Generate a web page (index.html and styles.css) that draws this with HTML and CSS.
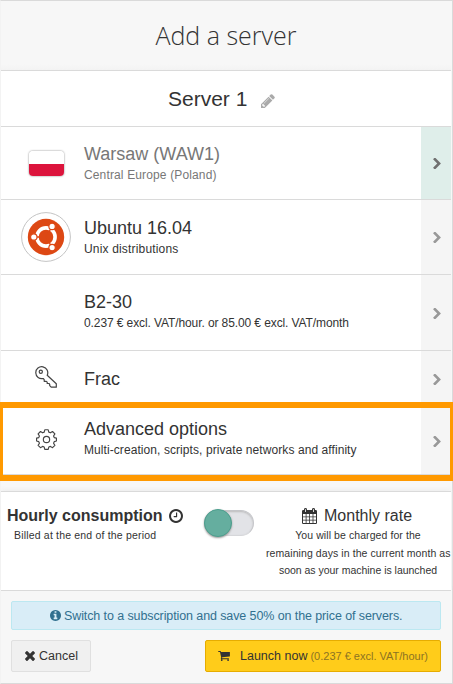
FILE: index.html
```html
<!DOCTYPE html>
<html lang="en">
<head>
<meta charset="utf-8">
<title>Add a server</title>
<link rel="stylesheet" href="styles.css">
</head>
<body>
<svg class="defs" width="0" height="0">
  <symbol id="chevron" viewBox="346 178 1036 1484"><path d="M1363 877l-742 742q-19 19-45 19t-45-19l-166-166q-19-19-19-45t19-45l531-531-531-531q-19-19-19-45t19-45l166-166q19-19 45-19t45 19l742 742q19 19 19 45t-19 45z" transform="translate(0 88)"/></symbol>
</svg>
<main class="panel">
  <h1 class="heading"><span>Add a server</span></h1>
  <section class="name">
    <span class="name-text">Server 1</span>
    <svg class="pencil" viewBox="128 128 1536 1536"><path d="M491 1536l91-91-235-235-91 91v107h128v128h107zm523-928q0-22-22-22-10 0-17 7l-542 542q-7 7-7 17 0 22 22 22 10 0 17-7l542-542q7-7 7-17zm-54-192l416 416-832 832h-416v-416zm683 96q0 53-37 90l-166 166-416-416 166-165q36-38 90-38 53 0 91 38l235 234q37 39 37 91z"/></svg>
  </section>
  <section class="row region">
    <div class="icon"><span class="flag"></span></div>
    <div class="label"><div class="title">Warsaw (WAW1)</div><div class="sub s-warsaw">Central Europe (Poland)</div></div>
    <div class="arrow active"><svg><use href="#chevron"/></svg></div>
  </section>
  <section class="row system">
    <div class="icon">
      <svg class="ubuntu" viewBox="0 0 50 50">
        <circle cx="25" cy="25" r="24.400" fill="#fff" stroke="#c4c4c4"/>
        <circle cx="25" cy="25" r="18.200" fill="#dd4814"/>
        <circle cx="25" cy="25" r="9.100" fill="none" stroke="#fff" stroke-width="3.600"/>
        <path d="M25 25H11M25 25L32 12.900M25 25L32 37.100" stroke="#dd4814" stroke-width="1.300"/>
        <g fill="#fff" stroke="#dd4814" stroke-width="1.200">
          <circle cx="12.800" cy="25" r="3.200"/><circle cx="31.100" cy="14.400" r="3.200"/><circle cx="31.100" cy="35.600" r="3.200"/>
        </g>
      </svg>
    </div>
    <div class="label"><div class="title">Ubuntu 16.04</div><div class="sub s-ubuntu">Unix distributions</div></div>
    <div class="arrow"><svg><use href="#chevron"/></svg></div>
  </section>
  <section class="row flavor">
    <div class="icon"></div>
    <div class="label"><div class="title">B2-30</div><div class="sub s-flavor">0.237 € excl. VAT/hour. or 85.00 € excl. VAT/month</div></div>
    <div class="arrow"><svg><use href="#chevron"/></svg></div>
  </section>
  <section class="row key">
    <div class="icon">
      <svg class="line-icon key-icon" viewBox="0 0 22 22"><circle cx="5.800" cy="5.800" r="1.600"/><path d="M12.200 9.200A6 6 0 1 0 8.200 12.500L9.200 13.600V15.300H11.300L12.200 16.200V17.500H14L14.700 18.300V19.600L16.200 21.200H21.300V17.800Z"/></svg>
    </div>
    <div class="label"><div class="title">Frac</div></div>
    <div class="arrow"><svg><use href="#chevron"/></svg></div>
  </section>
  <section class="row advanced">
    <div class="icon">
      <svg class="line-icon gear-icon" viewBox="0 0 22 22"><circle cx="11" cy="11" r="3.300"/><path d="M9.200 .8h3.600l.6 2.500 1.700.7 2.200-1.400 2.500 2.500-1.400 2.200.7 1.700 2.300.6v3l-2.300.6-.7 1.700 1.400 2.200-2.500 2.500-2.200-1.400-1.700.7-.6 2.500H9.200l-.6-2.500-1.700-.7-2.200 1.400-2.500-2.500 1.400-2.200-.7-1.700-2.300-.6v-3l2.300-.6.7-1.700-1.400-2.200 2.500-2.500 2.200 1.400 1.700-.7Z"/></svg>
    </div>
    <div class="label"><div class="title">Advanced options</div><div class="sub s-adv">Multi-creation, scripts, private networks and affinity</div></div>
    <div class="arrow"><svg><use href="#chevron"/></svg></div>
    <div class="highlight"></div>
  </section>
  <section class="billing">
    <div class="hourly">
      <div class="plan"><b>Hourly consumption</b><svg class="clock" viewBox="128 128 1536 1536"><path d="M1024 544v448q0 14-9 23t-23 9h-320q-14 0-23-9t-9-23v-64q0-14 9-23t23-9h224v-352q0-14 9-23t23-9h64q14 0 23 9t9 23zm416 352q0-148-73-273t-198-198-273-73-273 73-198 198-73 273 73 273 198 198 273 73 273-73 198-198 73-273zm224 0q0 209-103 385.500t-279.500 279.500-385.500 103-385.500-103-279.500-279.500-103-385.500 103-385.500 279.500-279.500 385.500-103 385.500 103 279.500 279.500 103 385.500z"/></svg></div>
      <div class="note"><span class="n-hourly">Billed at the end of the period</span></div>
    </div>
    <div class="toggle"><span class="knob"></span></div>
    <div class="monthly">
      <div class="plan"><svg class="calendar" viewBox="0 0 15 16"><path fill-rule="evenodd" d="M0 3.200Q0 2 1.200 2H2V1.400Q2 0 3.500 0T5 1.400V2H10V1.400Q10 0 11.500 0T13 1.400V2H13.800Q15 2 15 3.200V14.800Q15 16 13.800 16H1.200Q0 16 0 14.800ZM1 6V8.500H3.700V6ZM4.500 6V8.500H7.200V6ZM8 6V8.500H10.600V6ZM11.400 6V8.500H14V6ZM1 9.200V11.700H3.700V9.200ZM4.500 9.200V11.700H7.200V9.200ZM8 9.200V11.700H10.600V9.200ZM11.400 9.200V11.700H14V9.200ZM1 12.400V15H3.700V12.400ZM4.500 12.400V15H7.200V12.400ZM8 12.400V15H10.600V12.400ZM11.400 12.400V15H14V12.400ZM3.100 1.200V4H3.900V1.200ZM11.100 1.200V4H11.900V1.200Z"/></svg><span>Monthly rate</span></div>
      <div class="note">You will be charged for the<br>remaining days in the current month as<br><span class="n-last">soon as your machine is launched</span></div>
    </div>
  </section>
  <footer class="footer">
    <div class="alert"><svg class="info" viewBox="128 128 1536 1536"><path d="M1152 1376v-160q0-14-9-23t-23-9h-96v-512q0-14-9-23t-23-9h-320q-14 0-23 9t-9 23v160q0 14 9 23t23 9h96v320h-96q-14 0-23 9t-9 23v160q0 14 9 23t23 9h448q14 0 23-9t9-23zm-128-896v-160q0-14-9-23t-23-9h-192q-14 0-23 9t-9 23v160q0 14 9 23t23 9h192q14 0 23-9t9-23zm640 416q0 209-103 385.500t-279.500 279.500-385.500 103-385.500-103-279.500-279.500-103-385.500 103-385.500 279.500-279.500 385.500-103 385.500 103 279.500 279.500 103 385.500z"/></svg><span class="alert-text">Switch to a subscription and save 50% on the price of servers.</span></div>
    <div class="actions">
      <button class="btn cancel"><svg class="times" viewBox="302 366 1188 1188"><path d="M1490 1322q0 40-28 68l-136 136q-28 28-68 28t-68-28l-294-294-294 294q-28 28-68 28t-68-28l-136-136q-28-28-28-68t28-68l294-294-294-294q-28-28-28-68t28-68l136-136q28-28 68-28t68 28l294 294 294-294q28-28 68-28t68 28l136 136q28 28 28 68t-28 68l-294 294 294 294q28 28 28 68z"/></svg><span>Cancel</span></button>
      <button class="btn launch"><svg class="cart" viewBox="64 256 1664 1408"><path d="M704 1536q0 52-38 90t-90 38-90-38-38-90 38-90 90-38 90 38 38 90zm896 0q0 52-38 90t-90 38-90-38-38-90 38-90 90-38 90 38 38 90zm128-1088v512q0 24-16.500 42.500t-40.500 21.500l-1044 122q13 60 13 70 0 16-24 64h920q26 0 45 19t19 45-19 45-45 19h-1024q-26 0-45-19t-19-45q0-11 8-31.500t16-36 21.500-40 15.500-29.500l-177-823h-204q-26 0-45-19t-19-45 19-45 45-19h256q16 0 28.500 6.500t19.500 15.500 13 24.500 8 26 5.500 29.500 4.500 26h1201q26 0 45 19t19 45z"/></svg><span>Launch now</span><span class="price">(0.237 € excl. VAT/hour)</span></button>
    </div>
  </footer>
</main>
</body>
</html>
```
FILE: styles.css
```css
* { box-sizing: border-box; }
body { margin: 0; font-family: "Liberation Sans", Arial, sans-serif; color: #333; background: #f7f7f7; }
svg { display: block; flex: none; fill: currentColor; }
.defs { position: absolute; }
.panel { width: 453px; height: 684px; border: 1px solid #dadada; border-left-color: #f3f3f3; background: #f7f7f7; white-space: nowrap; display: flex; flex-direction: column; padding-right: 1px; }
.heading { margin: 0; height: 69px; display: flex; justify-content: center; font: 300 25px/68px "Open Sans", sans-serif; background: linear-gradient(#f7f7f7 92%, #f3f3f3); }
.name { height: 56px; border-top: 1px solid #dadada; background: #fff; display: flex; align-items: center; padding: 0 0 0 167px; font-size: 21px; line-height: 24px; }
.pencil { width: 14px; height: 14px; margin: 5px 0 0 14px; color: #aaa; }
.row { position: relative; display: flex; border-top: 1px solid #dadada; background: #fff; }
.region { height: 73px; }
.system { height: 75px; }
.flavor { height: 76px; }
.key { height: 57px; }
.advanced { height: 68px; border-bottom: 1px solid #dadada; }
.icon { width: 90px; display: flex; align-items: center; justify-content: center; flex: none; }
.label { flex: 1; margin-left: -7px; }
.title { font-size: 18px; line-height: 21px; }
.sub { font-size: 12px; line-height: 20px; }
.region .label { padding-top: 17px; color: #777; }
.system .label { padding-top: 18px; }
.flavor .label { padding-top: 17px; }
.key .label { padding-top: 18px; }
.advanced .label { padding-top: 11px; }
.s-warsaw { letter-spacing: .14px; }
.s-ubuntu { letter-spacing: .17px; }
.s-flavor { letter-spacing: -.1px; }
.s-adv { letter-spacing: .075px; }
.arrow { width: 30px; display: flex; align-items: center; padding-left: 12px; background: #f5f5f5; color: #999; flex: none; }
.arrow svg { width: 8px; height: 11px; }
.flavor .arrow { padding-top: 1px; }
.active { background: #dfeeea; color: #707070; }
.flag { width: 35px; height: 25px; border-radius: 4px; background: linear-gradient(#fff 50%, #dc143c 50%); box-shadow: 0 0 2px #777; }
.ubuntu { width: 50px; height: 50px; }
.line-icon { width: 22px; height: 22px; fill: none; stroke: #444; stroke-width: 1.200; stroke-linejoin: round; }
.key-icon { margin-top: -4px; }
.gear-icon { width: 21px; height: 21px; margin: -3px 0 0 1px; }
.highlight { position: absolute; left: -1px; right: -2px; top: -6px; height: 79px; border: solid #ff9900; border-width: 6px 3px; z-index: 1; }
.billing { margin-top: 16px; height: 99px; border-top: 1px solid #dadada; background: #fff; display: flex; box-shadow: 0 -2px 4px #efefef; }
.hourly { width: 203px; padding: 13px 0 0 6px; flex: none; }
.plan { display: flex; align-items: center; font-size: 16px; line-height: 22px; }
.clock { width: 14px; height: 14px; margin: -1px 0 0 6px; }
.note { font-size: 10.500px; line-height: 17.500px; letter-spacing: .08px; }
.hourly .note { padding-left: 7px; letter-spacing: .18px; }
.n-last { letter-spacing: -.02px; }
.toggle { width: 50px; height: 26px; margin-top: 18px; border-radius: 13px; background: #e2e3e7; border: 1px solid #c4c5c9; border-bottom-color: #d6d7da; box-shadow: inset 0 1px 2px #bbb; display: flex; align-items: center; flex: none; }
.knob { width: 28px; height: 28px; margin: 0 0 0 -1px; flex: none; border-radius: 50%; background: #65ae9f; border: 1px solid #4c9f8e; box-shadow: 0 1px 2px #999; }
.monthly { flex: 1; padding-top: 13px; }
.monthly .plan { padding-left: 48px; }
.calendar { width: 15px; height: 16px; margin-right: 7px; }
.monthly .note { width: 184px; margin-left: 12px; text-align: center; }
.footer { flex: 1; border-top: 1px solid #dadada; padding: 10px 10px 0 10px; }
.alert { height: 29px; border: 1px solid #bce8f1; border-radius: 2px; background: #d9edf7; color: #31708f; display: flex; align-items: center; font-size: 12.500px; padding-left: 38px; }
.alert-text { letter-spacing: -.1px; }
.info { width: 11px; height: 11px; margin-right: 3px; }
.actions { display: flex; justify-content: space-between; margin-top: 10px; }
.btn { height: 32px; border: 1px solid #e0e0e0; border-radius: 2px; background: #f0f0f0; color: #333; display: flex; align-items: center; padding: 0 0 1px 13px; font: 12.500px "Liberation Sans", Arial, sans-serif; white-space: nowrap; }
.cancel { width: 80px; }
.times { width: 10px; height: 10px; margin-right: 4px; }
.launch { width: 236px; background: #ffcc1a; border-color: #e6ac00; padding-left: 12px; }
.cart { width: 12px; height: 10px; margin-right: 10px; }
.price { font-size: 11px; color: #8c7323; margin-left: 3px; }
```
